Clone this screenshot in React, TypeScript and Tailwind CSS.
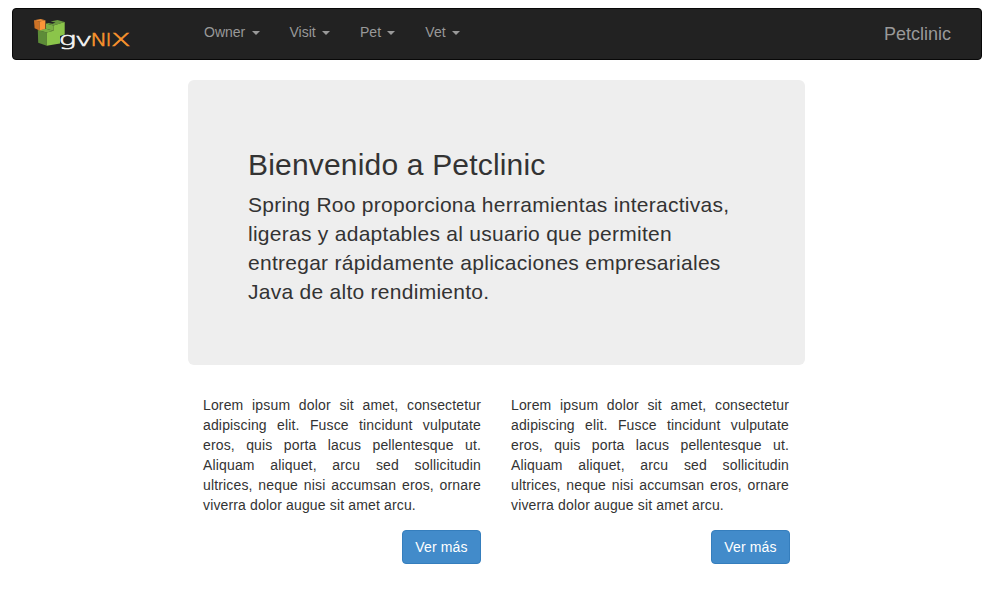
const MENU_ITEMS = ["Owner", "Visit", "Pet", "Vet"];

const LOREM =
  "Lorem ipsum dolor sit amet, consectetur adipiscing elit. Fusce tincidunt vulputate eros, quis porta lacus pellentesque ut. Aliquam aliquet, arcu sed sollicitudin ultrices, neque nisi accumsan eros, ornare viverra dolor augue sit amet arcu.";

function Logo() {
  return (
    <svg width="100" height="32" viewBox="0 0 100 32" className="block" role="img" aria-label="gvNIX">
      <path d="M3.8 11 L12.7 13.4 V26.7 L4.2 23.7Z" fill="#5d8c38" />
      <path d="M3.8 11 L12 9.8 L19.5 11.8 L12.7 13.4Z" fill="#7ab044" />
      <path d="M12 4.6 L19.5 6.5 V11.8 L12 9.8Z" fill="#7ab044" />
      <path d="M12 4.6 L14.5 4 L18.5 4.8 L21.5 3.6 L16.5 2.5 L23.5 1.1 L30.7 3 L19.5 6.5Z" fill="#6a9a40" />
      <path d="M12.7 13.4 L19.5 11.8 V6.5 L30.7 3 V15.5 L26 17 V24.6 L12.7 26.7Z" fill="#8bc54a" />
      <path d="M0 1.2 L5.5 2.6 V11.5 L0.6 9.2Z" fill="#cc7226" />
      <path d="M0 1.2 L6.6 0 L11.4 1.2 L5.5 2.6Z" fill="#e88a36" />
      <path d="M5.5 2.6 L11.4 1.2 V9.8 L5.5 11.5Z" fill="#fb9638" />
      <g fontFamily="'DejaVu Sans', sans-serif" fontWeight="200" strokeWidth="0.6">
        <text x="24.8" y="26" fontSize="17" textLength="17.5" lengthAdjust="spacingAndGlyphs" fill="#f2f2f2" stroke="#f2f2f2">g</text>
        <text x="41" y="26.8" fontSize="18.5" textLength="17.3" lengthAdjust="spacingAndGlyphs" fill="#f2f2f2" stroke="#f2f2f2">v</text>
        <g fill="#f7922d" stroke="#f7922d" fontSize="17.5">
          <text x="56.3" y="26.8" textLength="17" lengthAdjust="spacingAndGlyphs">N</text>
          <text x="71.5" y="26.8" textLength="6" lengthAdjust="spacingAndGlyphs">I</text>
          <text x="77" y="26.8" textLength="19.5" lengthAdjust="spacingAndGlyphs">X</text>
        </g>
      </g>
    </svg>
  );
}

function NavItem({ label }: { label: string }) {
  return (
    <li>
      <a className="flex items-center px-[15px] py-[13px] text-sm leading-5">
        {label}
        <span className="ml-[6.3px] mt-0.5 h-0 w-0 border-x-4 border-t-4 border-x-transparent border-t-[#999]" />
      </a>
    </li>
  );
}

function Navbar() {
  return (
    <nav className="flex h-[52px] w-[970px] items-start rounded border border-[#080808] bg-[#222] text-[#999]">
      <div className="w-[176px] pl-[21px] pt-2.5">
        <Logo />
      </div>
      <ul className="flex">
        {MENU_ITEMS.map((label) => (
          <NavItem key={label} label={label} />
        ))}
      </ul>
      <span className="ml-auto pr-[30px] pt-[15px] text-lg leading-5">Petclinic</span>
    </nav>
  );
}

function Teaser() {
  return (
    <section>
      <p className="w-[278px] text-justify text-sm leading-5 tracking-[0.15px]">{LOREM}</p>
      <button className="ml-auto mt-[15px] block h-[34px] w-[79px] rounded border border-[#357ebd] bg-[#428bca] text-sm leading-5 tracking-[0.15px] text-white">
        Ver más
      </button>
    </section>
  );
}

export default function App() {
  return (
    <div className="h-[599px] bg-white pl-3 pt-2 font-['Liberation_Sans',Arial,sans-serif] text-[#333]">
      <Navbar />
      <main className="ml-44 mt-5 w-[617px]">
        <header className="h-[285px] rounded-md bg-[#eee] px-[60px] pt-[68px]">
          <h2 className="text-[30px] font-medium leading-[33px] tracking-[0.18px]">Bienvenido a Petclinic</h2>
          <p className="mt-[9px] text-[21px] leading-[29px] tracking-[0.27px]">
            Spring Roo proporciona herramientas interactivas, ligeras y adaptables al usuario que permiten entregar
            rápidamente aplicaciones empresariales Java de alto rendimiento.
          </p>
        </header>
        <div className="mt-[30px] grid grid-cols-[278px_279px] gap-[30px] px-[15px]">
          <Teaser />
          <Teaser />
        </div>
      </main>
    </div>
  );
}
